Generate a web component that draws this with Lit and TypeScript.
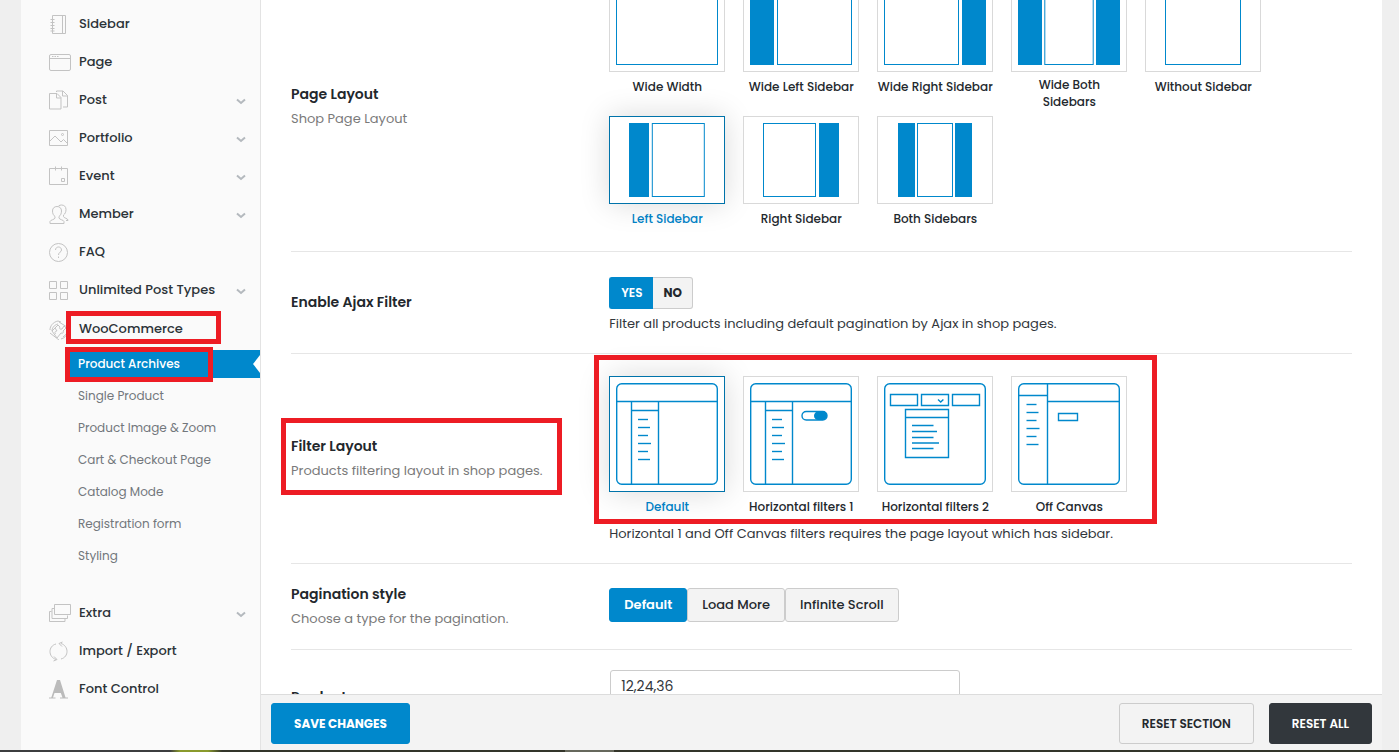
import { LitElement, html, svg, css, nothing } from "lit";
import { customElement, property, state } from "lit/decorators.js";
import { classMap } from "lit/directives/class-map.js";

type NavItem = { name: string; icon: string; more?: boolean };

const navTop: NavItem[] = [
  { name: "Sidebar", icon: "sidebar" },
  { name: "Page", icon: "page" },
  { name: "Post", icon: "post", more: true },
  { name: "Portfolio", icon: "portfolio", more: true },
  { name: "Event", icon: "event", more: true },
  { name: "Member", icon: "member", more: true },
  { name: "FAQ", icon: "faq" },
  { name: "Unlimited Post Types", icon: "types", more: true },
];

const navShop = [
  "Product Archives",
  "Single Product",
  "Product Image & Zoom",
  "Cart & Checkout Page",
  "Catalog Mode",
  "Registration form",
  "Styling",
];

const navBottom: NavItem[] = [
  { name: "Extra", icon: "extra", more: true },
  { name: "Import / Export", icon: "sync" },
  { name: "Font Control", icon: "font" },
];

const navIcons: Record<string, unknown> = {
  sidebar: svg`<path d="M3.5 1.5h13v18h-13zM13.5 1.5v18M1.5 5.5h4M1.5 8.5h4M1.5 11.5h4M1.5 14.5h4M1.5 17h4"/>`,
  page: svg`<rect x=".5" y="2.5" width="21" height="16" rx="1.5"/><path d="M.5 6.5h21M3 4.5h1.500M5.500 4.500h1.500M8 4.500h1.500"/>`,
  post: svg`<path d="M.5 3.500h7.500l4 4v11.500h-11.500zM7.500 3.500v4.500h4.500M7.500 2v-1h6.500l4.500 4.500v11.500h-4.500M13.500 1v5h5"/>`,
  portfolio: svg`<path d="M.5 2.500h18v15h-18zM.5 13.500l5.500-5.500 6 6 2.500-2.500 4 4"/><circle cx="13.500" cy="6.500" r="1"/>`,
  event: svg`<path d="M.5 2.500h18v16h-18zM6.500 .5v4M12.500 .5v4M12.500 12.500h3v3h-3z"/>`,
  member: svg`<path d="M1 19.500v-2c0-1.500 5-2 5-3.500v-1.500c-1.500-1-2.500-3-2.500-5.500 0-3 2-4.500 4.500-4.500s4.500 1.500 4.500 4.500c0 2.500-1 4.500-2.500 5.500v1.500c0 1.500 5 2 5 3.500v2zM9.500 2c1-.8 2-1 3-1 2.500 0 4.500 1.500 4.500 4.500 0 2.500-1 4.500-2.500 5.500v1.500c0 1.500 4.500 2 4.500 3.500v.5h-2"/>`,
  faq: svg`<circle cx="9.500" cy="10.500" r="9"/><path d="M6.500 8c0-4 6-4 6 0 0 2.200-3 2-3 5M9.500 14.500v1.500"/>`,
  types: svg`<path d="M.5 1.500h7v7h-7zM11.500 1.500h7v7h-7zM.5 12.500h7v7h-7zM11.500 12.500h7v7h-7z"/>`,
  woo: svg`<path d="M1 11c0-4 3-8 8-9l3 1M3 12c0-3 2-6 6-7M3 12l6-6 2 2c-1 1 0 3 2 2l2-3 2 2-3 3c1 1 0 3-2 2l-4 5zM6 9l2 3c-2 0-3 2-1 3M1 14l9 7M14 18c3-2 5-5 5-9M12 20c4-1 6-4 7-7M10 3l8 5"/>`,
  extra: svg`<path d="M5.500 1.500h16v10h-16zM5 5.500h-2v10h15.500v-3M2.500 8.500h-2v10h15.500v-2.500"/>`,
  sync: svg`<path d="M7 3c-8 2-8 13 0 15.500M5 15.500l3 3-3.500 1.500M12 18c8-2 8-13 0-15.500M13 5.500l-3-3 3.500-1.500"/>`,
  font: svg`<path class="solid" d="M8 1h3l5.500 17.500h2.500v1h-8v-1h2.500l-1.700-4.500h-6.300l-1.500 4.500h2.500v1h-7v-1h2.800z"/>`,
};

const filled = (x: number, w: number) => svg`<rect class="fill" x=${x} y="0" width=${w} height="74"/>`;
const outline = (x: number, w: number) => svg`<rect x=${x} y=".5" width=${w} height="73"/>`;

const dashes = (x: number, y: number) =>
  [10, 12, 10, 13, 10, 12].map((w, i) => svg`<path d="M${x} ${y + i * 8}h${w}"/>`);

const frame = svg`<rect x=".7" y=".7" width="100.600" height="100.600" rx="5"/>`;
const column = svg`<path d="M1 18.500h100M15.500 18.500v83M42.500 18.500v83M15.500 27.500h27"/>${dashes(22, 36.5)}`;

type Option = { name: string; art: unknown };

const pageLayouts: Option[] = [
  { name: "Wide Width", art: outline(0.5, 101) },
  { name: "Wide Left Sidebar", art: [filled(0, 24), outline(27.5, 74)] },
  { name: "Wide Right Sidebar", art: [outline(0.5, 74), filled(78, 24)] },
  { name: "Wide Both Sidebars", art: [filled(0, 24), outline(26.8, 48.4), filled(78, 24)] },
  { name: "Without Sidebar", art: outline(13.5, 75) },
  { name: "Left Sidebar", art: [filled(13, 20), outline(36.3, 52)] },
  { name: "Right Sidebar", art: [outline(13.5, 52), filled(69, 20)] },
  { name: "Both Sidebars", art: [filled(14, 17), outline(33.5, 35), filled(71, 17)] },
];

const filterLayouts: Option[] = [
  { name: "Default", art: [frame, column] },
  {
    name: "Horizontal filters 1",
    art: [frame, column, svg`<rect x="52" y="28.500" width="25" height="8.500" rx="4.250"/><rect class="fill" x="64" y="28.500" width="13" height="8.500" rx="4.250"/>`],
  },
  {
    name: "Horizontal filters 2",
    art: [
      frame,
      svg`<path d="M6.500 11.500h27v11h-27zM37.500 11.500h27v11h-27zM68.500 11.500h27v11h-27zM54 16.500l2.700 2.500 2.700-2.500M21.500 26.500h43v48h-43zM21.500 34.500h43M28 42.500h21.500M28 48.500h25M28 54.500h21.500M28 60h27M28 65.500h21.500"/>`,
    ],
  },
  {
    name: "Off Canvas",
    art: [frame, svg`<path d="M29.500 1v100M1 12.500h28.500M29.500 18.500h72M40.500 30.500h19v7h-19z"/>`, dashes(8.5, 21.5)],
  },
];

@customElement("option-tiles")
class OptionTiles extends LitElement {
  @property() name = "";
  @property() value = "";
  @property({ type: Number }) artHeight = 74;
  @property({ attribute: false }) options: Option[] = [];

  static styles = css`
    :host { display: block; }
    .tiles { display: flex; flex-wrap: wrap; gap: 0 18px; margin: 0; padding: 0; border: 0; }
    .tile { width: 116px; margin-bottom: 6px; cursor: pointer; }
    .radio { position: absolute; opacity: 0; margin: 0; }
    .art { display: block; padding: 6px; border: 1px solid #d9d9d9; background: #fff; }
    .drawing { display: block; width: 100%; fill: none; stroke: #0088cc; }
    .square { stroke-width: 1.4; }
    .fill { fill: #0088cc; stroke: none; }
    .caption {
      display: flex; align-items: center; justify-content: center;
      min-height: 21px; margin: 4px -2px 0; padding: 0 2px;
      font-size: 12px; line-height: 17px; font-weight: 500; text-align: center; color: #23282d;
    }
    .chosen .art { border-color: #0073aa; box-shadow: 0 0 30px rgba(0, 0, 0, 0.15); }
    .chosen .caption { color: #0080c4; }
  `;

  render() {
    return html`<fieldset class="tiles" aria-label=${this.name}>
      ${this.options.map(
        (o) => html`<label class=${classMap({ tile: true, chosen: o.name === this.value })}>
          <input class="radio" type="radio" name="choice" .checked=${o.name === this.value} @change=${() => (this.value = o.name)} />
          <span class="art">
            <svg class=${classMap({ drawing: true, square: this.artHeight > 74 })} viewBox="0 0 102 ${this.artHeight}" aria-hidden="true">${o.art}</svg>
          </span>
          <span class="caption">${o.name}</span>
        </label>`
      )}
    </fieldset>`;
  }
}

@customElement("app-root")
class AppRoot extends LitElement {
  @state() ajax = true;
  @state() pagination = "Default";

  static styles = css`
    :host {
      display: block; height: 100vh; overflow: hidden;
      background: #efefef; color: #23282d;
      font-family: Poppins, Inter, sans-serif; font-size: 13px;
    }
    *, *::before, *::after { box-sizing: border-box; }
    .page { display: flex; flex-direction: column; height: 100%; }
    .frame { flex: 1; min-height: 0; display: grid; grid-template-columns: 240px minmax(0, 1fr); padding: 0 17px 0 21px; }
    .taskbar { height: 2px; background: linear-gradient(90deg, #3c3d3f 170px, #8a9a2c 180px 208px, #33352a 222px 565px, #66685c 565px 614px, #33352a 614px); }

    .nav { background: #fafafa; border-right: 1px solid #e3e3e3; padding-top: 5px; overflow: hidden; }
    .list { list-style: none; margin: 0; padding: 0; }
    .open { margin-top: 1px; }
    .item {
      position: relative; display: flex; align-items: center; gap: 8px; height: 38px;
      padding: 0 14px 0 28px; color: #2c3338; text-decoration: none;
      font-size: 13px; font-weight: 500;
    }
    .icon { width: 22px; height: 21px; flex: none; fill: none; stroke: #c3c3c3; stroke-width: 1; }
    .solid { fill: #bbb; stroke: none; }
    .chevron { width: 10px; height: 7px; margin: 2px 0 0 auto; fill: none; stroke: #b4b9be; stroke-width: 2; }
    .sub { display: flex; flex-direction: column; gap: 4px; padding: 2px 0 24px 46px; }
    .link {
      position: relative; display: flex; align-items: center; height: 28px; padding-left: 11px;
      color: #72777c; text-decoration: none; font-size: 12px;
    }
    .current { background: #0088cc; color: #fff; font-weight: 500; }
    .current::after {
      content: ""; position: absolute; right: 0; top: 5px;
      border: solid transparent; border-width: 9px 7px 9px 0; border-right-color: #fff;
    }
    .mark { position: absolute; border: 5px solid #ed1c24; pointer-events: none; }
    .mark-parent { left: 45px; top: 1px; width: 155px; height: 33px; }
    .mark-link { left: -2px; top: -3px; width: 148px; height: 35px; z-index: 1; }
    .mark-label { left: -10px; top: -16px; width: 281px; height: 77px; }
    .mark-tiles { left: -15px; top: -21px; width: 563px; height: 169px; }

    .main { display: flex; flex-direction: column; min-width: 0; min-height: 0; background: #fff; }
    .content { flex: 1; min-height: 0; overflow: hidden; padding: 0 30px; }
    .rows { margin-top: -38px; }
    .row { display: grid; grid-template-columns: 3fr 7fr; border-bottom: 1px solid #e6e6e6; }
    .about { display: flex; align-items: center; padding-bottom: 1px; }
    .about-text { position: relative; }
    .title { display: block; margin: 0 0 1px; font-size: 14px; line-height: 24px; font-weight: 600; color: #23282d; }
    .hint { margin: 0; line-height: 24px; color: #7a7a7a; }
    .control { padding: 22px 0 16px; }
    .control-ajax { padding: 25px 0 19px; }
    .control-filter { padding: 22px 0 19px; }
    .control-pages { padding: 24px 0 27px; }
    .control-products { padding: 20px 0 44px 1px; }
    .boxed { position: relative; }
    .note { margin: 1px 0 0; line-height: 20px; color: #32373c; }

    .button { font: inherit; cursor: pointer; border: 1px solid #ccc; background: #f3f3f3; color: #23282d; }
    .switch { display: flex; margin-bottom: 5px; }
    .toggle { height: 32px; font-size: 12px; font-weight: 700; padding: 0; }
    .yes { width: 44px; border-radius: 3px 0 0 3px; border-right: 0; }
    .no { width: 40px; border-radius: 0 3px 3px 0; border-left: 0; }
    .choice { height: 34px; padding: 0 14px; border-radius: 3px; font-weight: 500; }
    .on { background: #0088cc; border-color: #0088cc; color: #fff; font-weight: 600; }
    .field {
      display: block; width: 350px; max-width: 100%; height: 32px; padding: 0 10px;
      border: 1px solid #ccc; border-radius: 3px; background: #fff;
      font: inherit; font-size: 14px; color: #32373c;
    }
    .bar { display: flex; gap: 15px; padding: 8px 10px 6px; border-top: 1px solid #dcdcdc; background: #f3f3f3; }
    .action { height: 41px; padding: 0 22px; border-radius: 3px; font-size: 12px; font-weight: 600; }
    .save { margin-right: auto; background: #0088cc; border-color: #0088cc; color: #fff; font-weight: 700; }
    .all { background: #32373c; border-color: #32373c; color: #fff; }
  `;

  navIcon(name: string) {
    return html`<svg class="icon" viewBox="0 0 22 21" aria-hidden="true">${navIcons[name]}</svg>`;
  }

  navItem(item: NavItem) {
    return html`<li>
      <a class="item" href="#">
        ${this.navIcon(item.icon)}<span>${item.name}</span>
        ${item.more ? html`<svg class="chevron" viewBox="0 0 10 7" aria-hidden="true"><path d="M1 1.500l4 3.500 4-3.500"/></svg>` : nothing}
      </a>
    </li>`;
  }

  render() {
    return html`<div class="page">
      <div class="frame">
        <nav class="nav">
          <ul class="list">
            ${navTop.map((i) => this.navItem(i))}
            <li class="open">
              <a class="item" href="#">${this.navIcon("woo")}<span>WooCommerce</span><span class="mark mark-parent"></span></a>
              <ul class="list sub">
                ${navShop.map(
                  (n, i) => html`<li>
                    <a class=${classMap({ link: true, current: i === 0 })} href="#">${n}${i === 0 ? html`<span class="mark mark-link"></span>` : nothing}</a>
                  </li>`
                )}
              </ul>
            </li>
            ${navBottom.map((i) => this.navItem(i))}
          </ul>
        </nav>

        <main class="main">
          <div class="content">
            <div class="rows">
              <section class="row">
                <div class="about"><div class="about-text"><h3 class="title">Page Layout</h3><p class="hint">Shop Page Layout</p></div></div>
                <div class="control">
                  <option-tiles name="Page Layout" value="Left Sidebar" .options=${pageLayouts}></option-tiles>
                </div>
              </section>

              <section class="row">
                <div class="about"><h3 class="title">Enable Ajax Filter</h3></div>
                <div class="control-ajax">
                  <div class="switch">
                    <button class=${classMap({ button: true, toggle: true, yes: true, on: this.ajax })} @click=${() => (this.ajax = true)}>YES</button>
                    <button class=${classMap({ button: true, toggle: true, no: true, on: !this.ajax })} @click=${() => (this.ajax = false)}>NO</button>
                  </div>
                  <p class="note">Filter all products including default pagination by Ajax in shop pages.</p>
                </div>
              </section>

              <section class="row">
                <div class="about">
                  <div class="about-text">
                    <h3 class="title">Filter Layout</h3>
                    <p class="hint">Products filtering layout in shop pages.</p>
                    <span class="mark mark-label"></span>
                  </div>
                </div>
                <div class="control-filter">
                  <div class="boxed">
                    <option-tiles name="Filter Layout" value="Default" artHeight="102" .options=${filterLayouts}></option-tiles>
                    <span class="mark mark-tiles"></span>
                  </div>
                  <p class="note">Horizontal 1 and Off Canvas filters requires the page layout which has sidebar.</p>
                </div>
              </section>

              <section class="row">
                <div class="about"><div class="about-text"><h3 class="title">Pagination style</h3><p class="hint">Choose a type for the pagination.</p></div></div>
                <div class="control-pages">
                  ${["Default", "Load More", "Infinite Scroll"].map(
                    (n) => html`<button class=${classMap({ button: true, choice: true, on: this.pagination === n })} @click=${() => (this.pagination = n)}>${n}</button>`
                  )}
                </div>
              </section>

              <section class="row">
                <div class="about"><label class="title" for="count">Products per page</label></div>
                <div class="control-products"><input class="field" id="count" type="text" value="12,24,36" /></div>
              </section>
            </div>
          </div>

          <footer class="bar">
            <button class="button action save">SAVE CHANGES</button>
            <button class="button action">RESET SECTION</button>
            <button class="button action all">RESET ALL</button>
          </footer>
        </main>
      </div>
      <div class="taskbar"></div>
    </div>`;
  }
}
